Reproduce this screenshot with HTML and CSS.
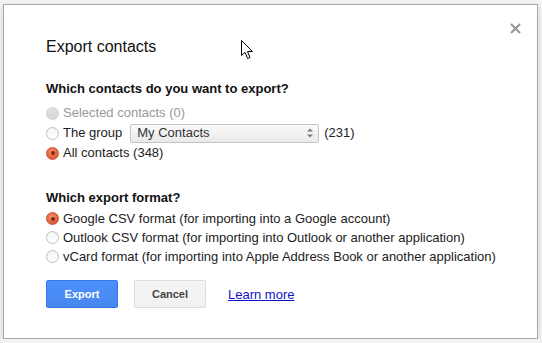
FILE: index.html
```html
<!DOCTYPE html>
<html lang="en">
<head>
    <meta charset="UTF-8">
    <title>Export contacts</title>
    <link rel="stylesheet" href="styles.css">
</head>
<body>
    <div class="dialog">
        <button class="close" title="Close">
            <svg width="11" height="11" viewBox="0 0 11 11"><path d="M1 1L10 10M10 1L1 10" stroke="#9a9a9a" stroke-width="2.2"/></svg>
        </button>

        <h1>Export contacts</h1>

        <h2>Which contacts do you want to export?</h2>
        <div class="options">
            <div class="row disabled"><span class="radio"></span>Selected contacts (0)</div>
            <div class="row"><span class="radio"></span>The group
                <span class="select">My Contacts
                    <span class="arrows">
                        <svg width="6" height="10" viewBox="0 0 6 10"><path d="M0 3.5L3 0.5L6 3.5ZM0 6.5L3 9.5L6 6.5Z" fill="#777"/></svg>
                    </span>
                </span>
                (231)
            </div>
            <div class="row"><span class="radio checked"></span>All contacts (348)</div>
        </div>

        <h2 class="second">Which export format?</h2>
        <div class="options formats">
            <div class="row"><span class="radio checked"></span>Google CSV format (for importing into a Google account)</div>
            <div class="row"><span class="radio"></span>Outlook CSV format (for importing into Outlook or another application)</div>
            <div class="row"><span class="radio"></span>vCard format (for importing into Apple Address Book or another application)</div>
        </div>

        <div class="buttons">
            <button class="btn primary">Export</button>
            <button class="btn">Cancel</button>
            <a href="#" class="learn">Learn more</a>
        </div>

        <svg class="cursor" width="13" height="20" viewBox="0 0 13 20">
            <path d="M0.5 0.5L0.5 15.5L4 12.3L6.6 18.5L9 17.5L6.5 11.5L11.5 11.5Z" fill="#fff" stroke="#000" stroke-width="1"/>
        </svg>
    </div>
</body>
</html>
```

FILE: styles.css
```css
body {
    margin: 0;
    background-color: #f3f3f3;
    font-family: "Liberation Sans", Arial, sans-serif;
    font-size: 13px;
    color: #222;
    overflow: hidden;
}

.dialog {
    position: relative;
    box-sizing: border-box;
    width: 535px;
    height: 335px;
    margin: 4px 0 0 3px;
    padding: 32px 0 0 42px;
    background-color: #fff;
    border: 1px solid #a9a9a9;
    box-shadow: 0 2px 6px rgba(0, 0, 0, 0.15);
}

.close {
    position: absolute;
    top: 18px;
    right: 16px;
    width: 11px;
    height: 11px;
    padding: 0;
    border: none;
    background: none;
}

.close svg {
    display: block;
}

h1 {
    margin: 0;
    font-size: 16px;
    font-weight: normal;
    line-height: 20px;
    color: #111;
}

h2 {
    margin: 24px 0 0;
    font-size: 13px;
    font-weight: bold;
    line-height: 16px;
    color: #111;
}

h2.second {
    margin-top: 27px;
}

.options {
    margin-top: 6px;
}

.row {
    display: flex;
    align-items: center;
    height: 20px;
    line-height: 20px;
    white-space: nowrap;
}

.formats {
    margin-top: 3px;
}

.formats .row {
    height: 19px;
    line-height: 19px;
}

.row.disabled {
    color: #999;
}

.radio {
    box-sizing: border-box;
    width: 13px;
    height: 13px;
    margin-right: 4px;
    border-radius: 50%;
    border: 1px solid #bdbdbd;
    background: linear-gradient(#f4f4f4, #fff);
    flex-shrink: 0;
    position: relative;
}

.disabled .radio {
    border-color: #d0d0d0;
    background: linear-gradient(#e2e2e2, #d6d6d6);
}

.radio.checked {
    border-color: #c8532f;
    background: radial-gradient(circle at 45% 35%, #f59a75 0%, #ea6b43 45%, #d7502b 100%);
}

.radio.checked::after {
    content: "";
    position: absolute;
    left: 3.5px;
    top: 3.5px;
    width: 4px;
    height: 4px;
    border-radius: 50%;
    background-color: #7a2a15;
}

.select {
    position: relative;
    box-sizing: border-box;
    display: inline-flex;
    align-items: center;
    width: 189px;
    height: 19px;
    margin: 0 5px 0 8px;
    padding-left: 6px;
    border: 1px solid #c4c4c4;
    border-radius: 2px;
    background: linear-gradient(#fafafa, #e9e9e9);
    color: #333;
}

.arrows {
    position: absolute;
    right: 5px;
    top: 3px;
    line-height: 0;
}

.buttons {
    display: flex;
    align-items: center;
    margin-top: 14px;
}

.btn {
    box-sizing: border-box;
    width: 72px;
    height: 28px;
    margin-right: 16px;
    padding: 0;
    border: 1px solid #dcdcdc;
    border-radius: 2px;
    background: linear-gradient(#f5f5f5, #f1f1f1);
    font-family: "Liberation Sans", Arial, sans-serif;
    font-size: 11px;
    font-weight: bold;
    color: #444;
}

.btn.primary {
    border-color: #3079ed;
    background: linear-gradient(#4d90fe, #4787ed);
    color: #fff;
}

.learn {
    margin-left: 6px;
    color: #1111cc;
    text-decoration: underline;
}

.cursor {
    position: absolute;
    left: 237px;
    top: 35px;
}
```
